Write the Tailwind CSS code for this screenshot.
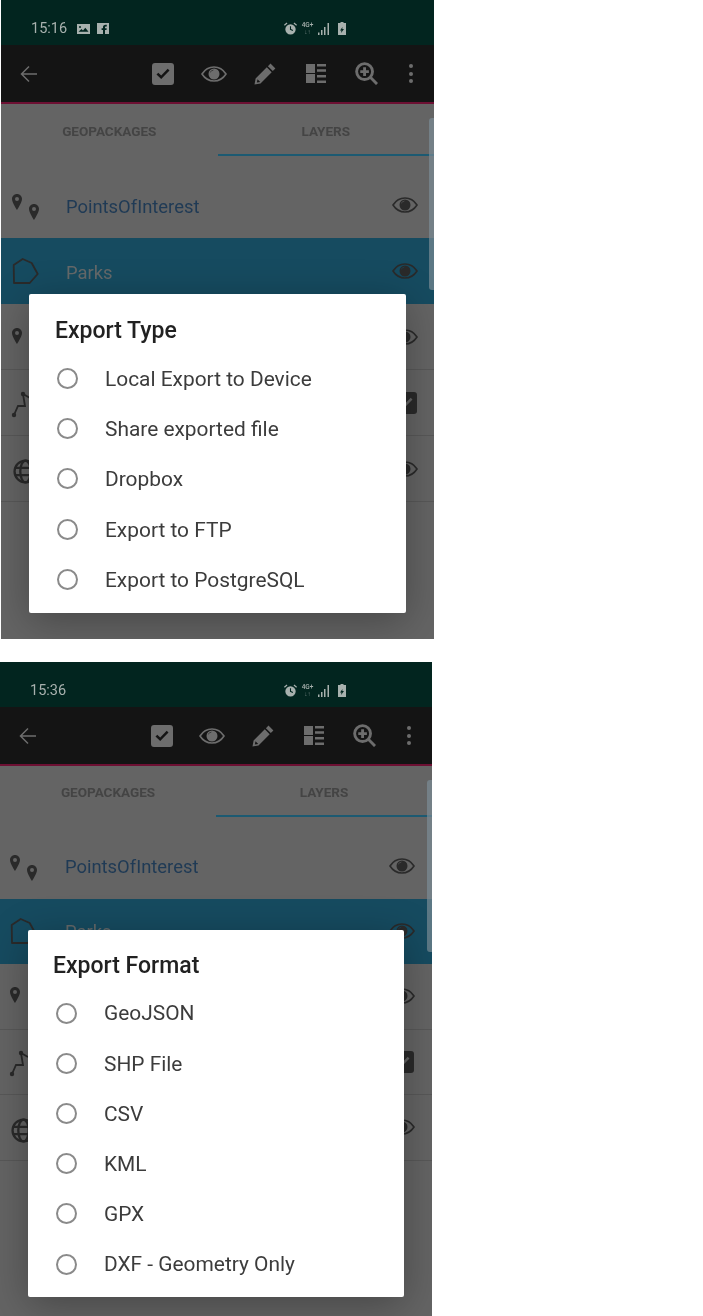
<!DOCTYPE html>
<html lang="en">
<head>
    <meta charset="UTF-8">
    <title>Export dialogs</title>
    <script src="https://cdn.jsdelivr.net/npm/@tailwindcss/browser@4"></script>
</head>
<body class="bg-white font-['Roboto',sans-serif]">
    <svg class="hidden">
        <symbol id="checkbox" viewBox="0 0 22 22"><path fill-rule="evenodd" d="M3 0h16a3 3 0 0 1 3 3v16a3 3 0 0 1-3 3H3a3 3 0 0 1-3-3V3a3 3 0 0 1 3-3zM4.500 11.500l4.700 4.600 8.300-8.600-1.800-1.700-6.500 6.700-2.900-2.800z"/></symbol>
        <symbol id="eye" viewBox="0 0 26 16"><path fill="none" stroke="currentColor" stroke-width="1.600" d="M1 8c2.800-4.400 7-7 12-7s9.200 2.600 12 7c-2.800 4.400-7 7-12 7S3.800 12.400 1 8z"/><path fill="currentColor" fill-rule="evenodd" d="M13 2.500a5.500 5.500 0 1 1 0 11 5.500 5.500 0 0 1 0-11zM13 3.700c-2 0-3.700 1.300-4.100 3.300 1-1.600 2.400-2.500 4.100-3.300z"/></symbol>
        <symbol id="pencil" viewBox="0 0 22 22"><path d="M16.500.6l4.900 4.900-2.600 2.600-4.900-4.900zM12.800 4.300l4.900 4.900L6.500 20.400.5 21.500l1.100-6zM3.500 16.200l-.6 3.300 3.300-.6z" fill-rule="evenodd"/></symbol>
        <symbol id="grid" viewBox="0 0 20 19"><path d="M0 0h9v9H0zM0 10h9v9H0zM11 0h9v2.500h-9zM11 5.300h9v2.500h-9zM11 11h9v2.500h-9zM11 16.500h9V19h-9z"/></symbol>
        <symbol id="zoom" viewBox="0 0 24 24"><g fill="none" stroke="currentColor" stroke-width="3"><circle cx="10" cy="10" r="8.300"/><path d="M16 16l7 7M10 5.500v9M5.500 10h9"/></g></symbol>
        <symbol id="pin" viewBox="0 0 10 16"><path fill-rule="evenodd" d="M5 0C2.200 0 0 2.200 0 5c0 3.600 5 11 5 11s5-7.400 5-11c0-2.800-2.200-5-5-5zm0 3a2 2 0 1 1 0 4 2 2 0 0 1 0-4z"/></symbol>
        <symbol id="poly" viewBox="0 0 40 40"><path fill="none" stroke="#2a2a2a" stroke-width="1.800" stroke-linejoin="round" d="M9.700 14l9-6 9 4 6 11-8 9H10z"/></symbol>
        <symbol id="line" viewBox="0 0 40 40"><g fill="#2a2a2a"><path fill="none" stroke="#2a2a2a" stroke-width="1.800" d="M10 32l4-9 7 0-2-12 7 4"/><circle cx="10" cy="32" r="2.200"/><circle cx="19" cy="11" r="2.200"/></g></symbol>
        <symbol id="globe" viewBox="0 0 24 24"><g fill="none" stroke="#2a2a2a" stroke-width="2.200"><circle cx="12" cy="12" r="10.500"/><ellipse cx="12" cy="12" rx="5" ry="10.500"/><path d="M2 8.500h20M2 15.500h20"/></g></symbol>
        <symbol id="alarm" viewBox="0 0 12 12"><path fill-rule="evenodd" d="M6 2a4.800 4.800 0 1 1 0 9.600A4.800 4.800 0 0 1 6 2zm-.5 2v3.200l2.500 1 .4-.9-1.900-.8V4zM0 2.600L2.500.5l.7.8L.7 3.400zM12 2.600L9.500.5l-.7.8 2.500 2.100z"/></symbol>
        <symbol id="signal" viewBox="0 0 12 12"><path d="M0 9.500h1.500V12H0zM3 7h1.500v5H3zM6 4h1.500v8H6zM9.500 0H11v12H9.500z"/></symbol>
        <symbol id="battery" viewBox="0 0 8 13"><path fill-rule="evenodd" d="M2.500 0h3v1H8v12H0V1h2.500zM4.500 5L2 8.500h1.500L3 11l3-4H4.300z"/></symbol>
        <symbol id="picture" viewBox="0 0 13 10"><path fill-rule="evenodd" d="M0 0h13v10H0zM1.500 7.800h10L8.300 3.700 6 6.500 4.500 5zM3 2a1 1 0 1 0 0 2 1 1 0 0 0 0-2z"/></symbol>
        <symbol id="facebook" viewBox="0 0 12 11"><path fill-rule="evenodd" d="M0 0h12v11H0zM8 11V7h1.500l.2-1.800H8V4.200c0-.5.200-.8.800-.8h1V1.800H8.500C7 1.800 6 2.700 6 4.100v1.100H4.600V7H6v4z"/></symbol>
    </svg>

    <div class="w-[703px] h-[1316px] overflow-hidden">
        <!-- first phone: export type -->
        <section class="relative ml-[1px] w-[433px] h-[639px] overflow-hidden bg-[#646464] blur-[0.4px]">
            <div class="flex items-center h-[45px] bg-[#02251f] text-[#a8b1ae] pl-[30px] pt-[12px]">
                <span class="text-[14.500px] w-[46px]">15:16</span>
                <svg class="w-[13px] h-[10px] fill-current"><use href="#picture"/></svg>
                <svg class="ml-[7px] w-[12px] h-[11px] fill-current"><use href="#facebook"/></svg>
                <svg class="ml-[175px] w-[13px] h-[13px] fill-current"><use href="#alarm"/></svg>
                <div class="ml-[4px] w-[13px] text-[6.500px] leading-[7px] font-medium text-center">4G+<br><span class="opacity-60">↓↑</span></div>
                <svg class="ml-[4px] w-[12px] h-[12px] fill-current"><use href="#signal"/></svg>
                <svg class="ml-[8px] w-[8px] h-[13px] fill-current"><use href="#battery"/></svg>
            </div>
            <div class="flex items-center h-[57px] bg-[#141414] text-[#6d6d6d]">
                <svg class="ml-[19px] w-[18px] h-[18px]" viewBox="0 0 18 18" fill="none" stroke="currentColor" stroke-width="1.500"><path d="M17 9H2M9 1.500L1.500 9 9 16.500"/></svg>
                <div class="ml-auto flex items-center pr-[4px]">
                    <div class="w-[51px] flex justify-center"><svg class="w-[22px] h-[22px] fill-current"><use href="#checkbox"/></svg></div>
                    <div class="w-[51px] flex justify-center"><svg class="w-[26px] h-[16px]"><use href="#eye"/></svg></div>
                    <div class="w-[51px] flex justify-center"><svg class="w-[22px] h-[22px] fill-current"><use href="#pencil"/></svg></div>
                    <div class="w-[51px] flex justify-center"><svg class="w-[20px] h-[19px] fill-current"><use href="#grid"/></svg></div>
                    <div class="w-[50px] flex justify-center"><svg class="w-[23px] h-[23px]"><use href="#zoom"/></svg></div>
                    <div class="w-[39px] flex flex-col items-center gap-[3.500px]"><i class="size-[4px] rounded-full bg-current"></i><i class="size-[4px] rounded-full bg-current"></i><i class="size-[4px] rounded-full bg-current"></i></div>
                </div>
            </div>
            <div class="h-[2px] bg-[#6d1033]"></div>
            <div class="grid grid-cols-2 h-[53px] text-[13.500px] font-bold text-[#444444] text-center">
                <div class="pt-[17px]">GEOPACKAGES</div>
                <div class="pt-[17px] border-b-[2px] border-[#1c5a72] h-[52px]">LAYERS</div>
            </div>
            <div class="mt-[15px] text-[18.400px]">
                <div class="flex items-center h-[66px] pl-[3px] pr-[16px]">
                    <svg class="w-[40px] h-[40px] shrink-0 fill-[#2a2a2a]" viewBox="0 0 40 40"><use href="#pin" x="8" y="9" width="10" height="16"/><use href="#pin" x="25" y="19" width="10" height="16"/></svg>
                    <span class="ml-[22px] pt-[4px] text-[#1f3a55]">PointsOfInterest</span>
                    <svg class="ml-auto w-[26px] h-[16px] text-[#2a2a2a]"><use href="#eye"/></svg>
                </div>
                <div class="flex items-center h-[66px] pl-[3px] pr-[16px] bg-[#164b60]">
                    <svg class="w-[40px] h-[40px] shrink-0"><use href="#poly"/></svg>
                    <span class="ml-[22px] pt-[4px] text-[#65696a]">Parks</span>
                    <svg class="ml-auto w-[26px] h-[16px] text-[#2a2a2a]"><use href="#eye"/></svg>
                </div>
                <div class="flex items-center h-[66px] pl-[3px] pr-[16px] border-b border-[#585858]">
                    <svg class="w-[40px] h-[40px] shrink-0 fill-[#2a2a2a]" viewBox="0 0 40 40"><use href="#pin" x="8" y="11" width="10" height="16"/></svg>
                    <svg class="ml-auto w-[26px] h-[16px] text-[#2a2a2a]"><use href="#eye"/></svg>
                </div>
                <div class="flex items-center h-[66px] pl-[3px] pr-[17px] border-b border-[#585858]">
                    <svg class="w-[40px] h-[40px] shrink-0"><use href="#line"/></svg>
                    <svg class="ml-auto w-[22px] h-[22px] fill-[#2a2a2a]"><use href="#checkbox"/></svg>
                </div>
                <div class="flex items-center h-[66px] pl-[12px] pr-[16px] border-b border-[#585858]">
                    <svg class="mt-[6px] w-[25px] h-[25px] shrink-0"><use href="#globe"/></svg>
                    <svg class="ml-auto w-[26px] h-[16px] text-[#2a2a2a]"><use href="#eye"/></svg>
                </div>
            </div>
            <div class="absolute top-[118px] right-0 w-[5px] h-[172px] rounded-l-[3px] bg-[#7b8c96]/70"></div>
            <div class="absolute left-[28px] top-[294px] w-[377px] h-[319px] rounded-[2px] bg-white shadow-[0_8px_40px_rgba(0,0,0,0.3)]">
                <h2 class="ml-[26px] pt-[17px] h-[56px] mb-[3px] leading-[40px] text-[23px] font-medium text-[#212121]">Export Type</h2>
                <div class="flex items-center h-[50.400px] pl-[28px] text-[20.900px] text-[#3c3c3c]"><i class="size-[21px] rounded-full border-2 border-[#8a8a8a]"></i><span class="ml-[27px] pt-[2px]">Local Export to Device</span></div>
                <div class="flex items-center h-[50.400px] pl-[28px] text-[20.900px] text-[#3c3c3c]"><i class="size-[21px] rounded-full border-2 border-[#8a8a8a]"></i><span class="ml-[27px] pt-[2px]">Share exported file</span></div>
                <div class="flex items-center h-[50.400px] pl-[28px] text-[20.900px] text-[#3c3c3c]"><i class="size-[21px] rounded-full border-2 border-[#8a8a8a]"></i><span class="ml-[27px] pt-[2px]">Dropbox</span></div>
                <div class="flex items-center h-[50.400px] pl-[28px] text-[20.900px] text-[#3c3c3c]"><i class="size-[21px] rounded-full border-2 border-[#8a8a8a]"></i><span class="ml-[27px] pt-[2px]">Export to FTP</span></div>
                <div class="flex items-center h-[50.400px] pl-[28px] text-[20.900px] text-[#3c3c3c]"><i class="size-[21px] rounded-full border-2 border-[#8a8a8a]"></i><span class="ml-[27px] pt-[2px]">Export to PostgreSQL</span></div>
            </div>
        </section>

        <!-- second phone: export format -->
        <section class="relative mt-[23px] w-[432px] h-[654px] overflow-hidden bg-[#646464] blur-[0.4px]">
            <div class="flex items-center h-[45px] bg-[#02251f] text-[#a8b1ae] pl-[30px] pt-[12px]">
                <span class="text-[14.500px] w-[46px]">15:36</span>
                <svg class="ml-[208px] w-[13px] h-[13px] fill-current"><use href="#alarm"/></svg>
                <div class="ml-[4px] w-[13px] text-[6.500px] leading-[7px] font-medium text-center">4G+<br><span class="opacity-60">↓↑</span></div>
                <svg class="ml-[4px] w-[12px] h-[12px] fill-current"><use href="#signal"/></svg>
                <svg class="ml-[8px] w-[8px] h-[13px] fill-current"><use href="#battery"/></svg>
            </div>
            <div class="flex items-center h-[57px] bg-[#141414] text-[#6d6d6d]">
                <svg class="ml-[19px] w-[18px] h-[18px]" viewBox="0 0 18 18" fill="none" stroke="currentColor" stroke-width="1.500"><path d="M17 9H2M9 1.500L1.500 9 9 16.500"/></svg>
                <div class="ml-auto flex items-center pr-[4px]">
                    <div class="w-[51px] flex justify-center"><svg class="w-[22px] h-[22px] fill-current"><use href="#checkbox"/></svg></div>
                    <div class="w-[50px] flex justify-center"><svg class="w-[26px] h-[16px]"><use href="#eye"/></svg></div>
                    <div class="w-[51px] flex justify-center"><svg class="w-[22px] h-[22px] fill-current"><use href="#pencil"/></svg></div>
                    <div class="w-[51px] flex justify-center"><svg class="w-[20px] h-[19px] fill-current"><use href="#grid"/></svg></div>
                    <div class="w-[50px] flex justify-center"><svg class="w-[23px] h-[23px]"><use href="#zoom"/></svg></div>
                    <div class="w-[39px] flex flex-col items-center gap-[3.500px]"><i class="size-[4px] rounded-full bg-current"></i><i class="size-[4px] rounded-full bg-current"></i><i class="size-[4px] rounded-full bg-current"></i></div>
                </div>
            </div>
            <div class="h-[2px] bg-[#6d1033]"></div>
            <div class="grid grid-cols-2 h-[52px] text-[13.500px] font-bold text-[#444444] text-center">
                <div class="pt-[16px]">GEOPACKAGES</div>
                <div class="pt-[16px] border-b-[2px] border-[#1c5a72] h-[51px]">LAYERS</div>
            </div>
            <div class="mt-[15px] text-[18.400px]">
                <div class="flex items-center h-[65.500px] pl-[2px] pr-[17px]">
                    <svg class="w-[40px] h-[40px] shrink-0 fill-[#2a2a2a]" viewBox="0 0 40 40"><use href="#pin" x="8" y="9" width="10" height="16"/><use href="#pin" x="25" y="19" width="10" height="16"/></svg>
                    <span class="ml-[23px] pt-[2px] text-[#1f3a55]">PointsOfInterest</span>
                    <svg class="ml-auto w-[26px] h-[16px] text-[#2a2a2a]"><use href="#eye"/></svg>
                </div>
                <div class="flex items-center h-[65.500px] pl-[2px] pr-[17px] bg-[#164b60]">
                    <svg class="w-[40px] h-[40px] shrink-0"><use href="#poly"/></svg>
                    <span class="ml-[23px] pt-[2px] text-[#65696a]">Parks</span>
                    <svg class="ml-auto w-[26px] h-[16px] text-[#2a2a2a]"><use href="#eye"/></svg>
                </div>
                <div class="flex items-center h-[65.500px] pl-[2px] pr-[17px] border-b border-[#585858]">
                    <svg class="w-[40px] h-[40px] shrink-0 fill-[#2a2a2a]" viewBox="0 0 40 40"><use href="#pin" x="8" y="11" width="10" height="16"/></svg>
                    <svg class="ml-auto w-[26px] h-[16px] text-[#2a2a2a]"><use href="#eye"/></svg>
                </div>
                <div class="flex items-center h-[65.500px] pl-[2px] pr-[18px] border-b border-[#585858]">
                    <svg class="w-[40px] h-[40px] shrink-0"><use href="#line"/></svg>
                    <svg class="ml-auto w-[22px] h-[22px] fill-[#2a2a2a]"><use href="#checkbox"/></svg>
                </div>
                <div class="flex items-center h-[65.500px] pl-[11px] pr-[17px] border-b border-[#585858]">
                    <svg class="mt-[6px] w-[25px] h-[25px] shrink-0"><use href="#globe"/></svg>
                    <svg class="ml-auto w-[26px] h-[16px] text-[#2a2a2a]"><use href="#eye"/></svg>
                </div>
            </div>
            <div class="absolute top-[118px] right-0 w-[5px] h-[172px] rounded-l-[3px] bg-[#7b8c96]/70"></div>
            <div class="absolute left-[28px] top-[268px] w-[376px] h-[367px] rounded-[2px] bg-white shadow-[0_8px_40px_rgba(0,0,0,0.3)]">
                <h2 class="ml-[25px] pt-[16px] h-[55px] mb-[3px] leading-[40px] text-[23px] font-medium text-[#212121]">Export Format</h2>
                <div class="flex items-center h-[50.200px] pl-[28px] text-[20.900px] text-[#3c3c3c]"><i class="size-[21px] rounded-full border-2 border-[#8a8a8a]"></i><span class="ml-[27px] pt-[2px]">GeoJSON</span></div>
                <div class="flex items-center h-[50.200px] pl-[28px] text-[20.900px] text-[#3c3c3c]"><i class="size-[21px] rounded-full border-2 border-[#8a8a8a]"></i><span class="ml-[27px] pt-[2px]">SHP File</span></div>
                <div class="flex items-center h-[50.200px] pl-[28px] text-[20.900px] text-[#3c3c3c]"><i class="size-[21px] rounded-full border-2 border-[#8a8a8a]"></i><span class="ml-[27px] pt-[2px]">CSV</span></div>
                <div class="flex items-center h-[50.200px] pl-[28px] text-[20.900px] text-[#3c3c3c]"><i class="size-[21px] rounded-full border-2 border-[#8a8a8a]"></i><span class="ml-[27px] pt-[2px]">KML</span></div>
                <div class="flex items-center h-[50.200px] pl-[28px] text-[20.900px] text-[#3c3c3c]"><i class="size-[21px] rounded-full border-2 border-[#8a8a8a]"></i><span class="ml-[27px] pt-[2px]">GPX</span></div>
                <div class="flex items-center h-[50.200px] pl-[28px] text-[20.900px] text-[#3c3c3c]"><i class="size-[21px] rounded-full border-2 border-[#8a8a8a]"></i><span class="ml-[27px] pt-[2px]">DXF - Geometry Only</span></div>
            </div>
        </section>
    </div>
</body>
</html>
